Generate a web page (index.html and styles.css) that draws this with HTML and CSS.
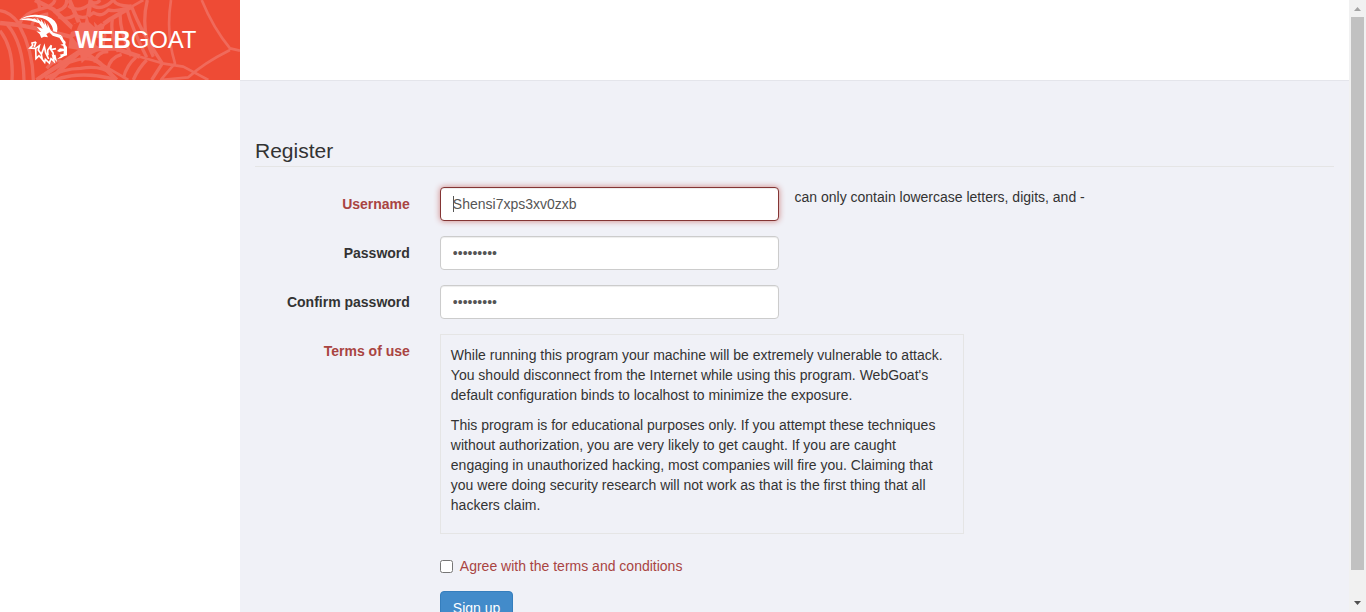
FILE: index.html
```html
<!DOCTYPE html>
<html lang="en">
<head>
<meta charset="utf-8">
<title>WebGoat</title>
<link rel="stylesheet" href="styles.css">
</head>
<body>
<div class="app">
  <aside class="sidebar">
    <div class="brand">
      <svg class="web" viewBox="0 0 720 240" aria-hidden="true">
        <g fill="none" stroke="#f06a5b" stroke-linejoin="round">
          <path stroke-width="13" d="M0 69L58 75L140 92L250 120M105 0L160 28L250 115M208 0L255 110L272 0M250 115L330 58L395 20M250 150L345 145L420 170M245 150L300 190L350 240M245 150L175 215L150 240M245 150L110 240M250 120L242 165"/>
          <path stroke-width="8" d="M395 20L430 0M420 170L487 190L550 200L625 240M300 190L385 240M605 0Q640 85 690 145L720 152M690 150Q610 190 565 232L480 240M513 0Q497 100 525 190L482 240"/>
          <path stroke-width="10" d="M0 92Q42 145 36 240M22 74Q70 130 72 240M58 77Q98 150 100 240M58 72Q30 35 0 32M58 72Q72 38 118 28Q120 8 108 0M95 80Q100 48 145 42M118 28Q160 20 165 0M160 35Q202 28 200 0M175 50Q200 62 225 45Q252 62 280 38Q305 54 325 30Q355 36 395 20M205 17Q235 40 270 12Q302 38 340 0M270 5Q290 15 300 0M340 0Q350 20 395 18M380 26Q398 90 440 172M360 40Q360 100 394 168M337 58Q330 105 355 155M310 72Q295 115 318 150M395 20Q420 90 487 190M442 0Q420 90 460 170M487 190L455 240M440 180Q415 205 400 240M408 172Q380 195 370 235M365 163Q330 172 322 210M325 155Q290 155 285 188M110 240Q175 190 218 184Q262 165 300 190M135 235Q190 205 242 205Q300 195 335 220M165 240Q245 210 350 240M190 190Q170 170 140 205"/>
        </g>
        <path fill="#f06a5b" d="M222 70L282 65L320 105L312 145L270 165L245 190L238 150L205 145L210 105Z"/>
        <path fill="#ee4b35" d="M262 48L281 61L284 82L267 66ZM283 44L303 61L311 72L291 65ZM220 72L240 66L230 90L212 96ZM218 112L235 104L232 130ZM295 92L320 85L308 110ZM285 112L305 118L301 144L288 135Z"/>
      </svg>
      <svg class="goat" viewBox="0 0 240 240" aria-hidden="true">
        <g fill="#fff">
          <path d="M56 60Q78 45 104 44Q146 43 164 63Q176 78 171 97L160 94Q158 76 144 63Q128 51 105 50Q76 50 56 60Z"/>
          <path d="M58 60Q82 51 104 58L96 51L114 62L110 53L124 67L122 56L134 75L133 62L143 84L142 70L153 92L160 98L185 106L177 113L158 107L148 97L139 103L144 112L132 110L124 114L119 102L109 94L123 96L110 80L128 86L117 70Q91 58 58 60Z"/>
          <path d="M176 110L186 108L190 118L197 126L196 134L201 141L201 166L192 169L184 174L171 178L183 168L179 164L191 161L191 153L178 156L171 153L180 145L192 146L190 138L181 134L190 132Z"/>
        </g>
        <path fill="none" stroke="#fff" stroke-width="5" stroke-linejoin="miter" d="M108 126L96 129L98 136L90 144L107 145L108 176L117 167L126 177L134 187L136 178L148 189L153 176L162 184L159 170L167 178L164 165M108 126L103 141M107 145L118 137L115 150L124 163L127 179M124 163L129 150L133 139L137 158L146 177M144 166L143 151L154 136L152 148L159 158L162 175M154 149L168 146M143 91L156 97"/>
      </svg>
      <span class="name"><b>WEB</b>GOAT</span>
    </div>
  </aside>
  <div class="main">
    <header class="header"></header>
    <form class="content">
      <h1 class="legend">Register</h1>
      <div class="row">
        <label class="label error" for="username">Username</label>
        <div class="field caret"><input class="control invalid" id="username" type="text" value="Shensi7xps3xv0zxb"></div>
        <span class="message">can only contain lowercase letters, digits, and -</span>
      </div>
      <div class="row">
        <label class="label" for="password">Password</label>
        <div class="field"><input class="control" id="password" type="password" value="secret123"></div>
      </div>
      <div class="row">
        <label class="label" for="confirm">Confirm password</label>
        <div class="field"><input class="control" id="confirm" type="password" value="secret123"></div>
      </div>
      <div class="row">
        <span class="label error">Terms of use</span>
        <div class="field wide">
          <div class="terms">
            <p>While running this program your machine will be extremely vulnerable to attack. You should disconnect from the Internet while using this program. WebGoat's default configuration binds to localhost to minimize the exposure.</p>
            <p>This program is for educational purposes only. If you attempt these techniques without authorization, you are very likely to get caught. If you are caught engaging in unauthorized hacking, most companies will fire you. Claiming that you were doing security research will not work as that is the first thing that all hackers claim.</p>
          </div>
        </div>
      </div>
      <div class="row">
        <span class="label"></span>
        <label class="field agree"><input type="checkbox">Agree with the terms and conditions</label>
      </div>
      <div class="row">
        <span class="label"></span>
        <div class="field"><button class="signup" type="button">Sign up</button></div>
      </div>
    </form>
  </div>
  <div class="scrollbar" aria-hidden="true">
    <svg width="17" height="17" viewBox="0 0 17 17"><path fill="#a3a3a3" d="M5 11L8.5 7L12 11Z"/></svg>
    <div class="thumb"></div>
    <svg width="17" height="17" viewBox="0 0 17 17"><path fill="#505050" d="M5 6L8.5 10L12 6Z"/></svg>
  </div>
</div>
</body>
</html>
```

FILE: styles.css
```css
*{box-sizing:border-box}
body{margin:0;overflow:hidden;font:14px/20px "Liberation Sans",Arial,sans-serif;color:#333;background:#fff}
.app{display:flex;height:612px;overflow:hidden}
.sidebar{flex:0 0 240px;background:#fff}
.brand{display:grid;width:240px;height:80px;background:#ee4b35;overflow:hidden}
.web,.goat,.name{grid-area:1/1}
.web{width:240px;height:80px}
.goat{width:80px;height:80px}
.name{color:#fff;font-size:24px;line-height:28px;letter-spacing:-.12px;padding:26px 0 0 75px}
.main{flex:1;min-width:0;height:612px;overflow:hidden;background:#f0f1f7}
.header{height:81px;background:#fff;border-bottom:1px solid #e4e5eb}
.content{padding-top:55px}
.legend{margin:0 15px 20px;font-size:21px;font-weight:400;line-height:30px;border-bottom:1px solid #e5e5e5;height:31px}
.row{display:flex;align-items:flex-start;margin-bottom:15px}
.label{width:16.6667%;padding:7px 15px 0;text-align:right;font-weight:700}
.error{color:#a94442}
.field{width:33.3333%;padding:0 15px}
.wide{width:50%}
.control{display:block;width:100%;height:34px;padding:6px 12px;font:inherit;color:#555;background:#fff;border:1px solid #ccc;border-radius:4px;box-shadow:inset 0 1px 1px rgba(0,0,0,.075);outline:0}
.invalid{border-color:#843534;box-shadow:inset 0 1px 1px rgba(0,0,0,.075),0 0 6px #ce8483}
.caret{position:relative}
.caret::after{content:"";position:absolute;left:28px;top:9px;width:1px;height:16px;background:#555}
.terms{height:200px;padding:10px;border:1px solid #e5e5e5;overflow:hidden}
.terms p{margin:0 0 10px}
.agree{display:flex;padding-top:7px;color:#a94442}
.agree input{width:13px;height:13px;margin:4px 7px 0 0}
.signup{display:block;height:34px;padding:6px 12px;font:inherit;color:#fff;background:#428bca;border:1px solid #357ebd;border-radius:4px}
.scrollbar{flex:0 0 17px;display:flex;flex-direction:column;justify-content:space-between;background:#f1f1f1}
.scrollbar svg{display:block}
.thumb{width:13px;height:553px;margin:0 2px auto;background:#c1c1c1}
```
